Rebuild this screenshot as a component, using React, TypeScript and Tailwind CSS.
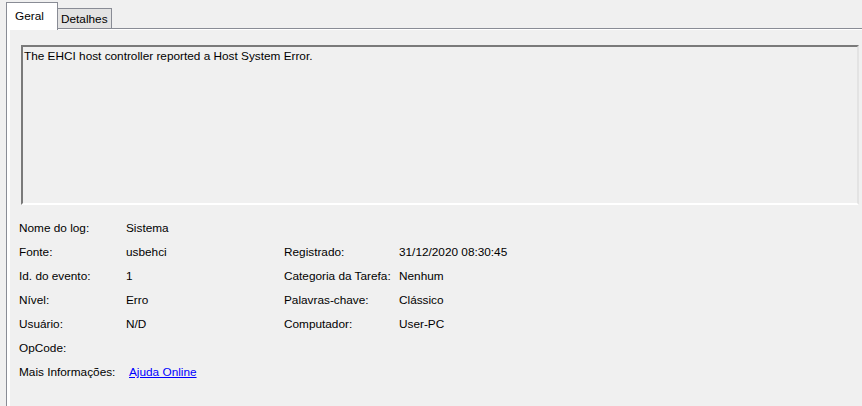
const rows: [string, React.ReactNode, string, string][] = [
  ["Nome do log:", "Sistema", "", ""],
  ["Fonte:", "usbehci", "Registrado:", "31/12/2020 08:30:45"],
  ["Id. do evento:", "1", "Categoria da Tarefa:", "Nenhum"],
  ["Nível:", "Erro", "Palavras-chave:", "Clássico"],
  ["Usuário:", "N/D", "Computador:", "User-PC"],
  ["OpCode:", "", "", ""],
  [
    "Mais Informações:",
    <a href="#" className="ml-[3px] text-[#0000ff] underline">
      Ajuda Online
    </a>,
    "",
    "",
  ],
];

export default function App() {
  return (
    <div className="w-[862px] h-[406px] overflow-hidden bg-[#f0f0f0] pt-[2px] pl-[6px] text-[11.8px] text-black [font-family:'Liberation_Sans',Arial,sans-serif]">
      <div className="flex items-end h-[26px]">
        <div className="relative z-10 -mb-[2px] h-[28px] w-[52px] border border-b-0 border-[#898c95] bg-white pl-[8px] pt-[5px] leading-[16px]">
          Geral
        </div>
        <div className="h-[20px] w-[54px] border-t border-r border-[#898c95] bg-[#e3e3e3] pl-[3px] pt-[2px] leading-[16px]">
          Detalhes
        </div>
      </div>
      <div className="h-[400px] border-t border-l border-[#898c95] bg-white pt-[1px] pl-[3px]">
        <div className="h-full bg-[#f0f0f0] pl-[11px] pt-[15px]">
          <div className="h-[160px] w-[838px] border-t-2 border-l-2 border-t-[#7a7a7a] border-l-[#7a7a7a] border-r-2 border-b-2 border-r-[#e3e3e3] border-b-[#ffffff] pl-[1px] pt-[1px] leading-[16px]">
            The EHCI host controller reported a Host System Error.
          </div>
          <div className="mt-[11px] -ml-[2px]">
            {rows.map(([l1, v1, l2, v2], i) => (
              <div
                key={i}
                className="grid h-[24px] grid-cols-[107px_158px_115px_1fr] items-center leading-[16px]"
              >
                <span>{l1}</span>
                <span>{v1}</span>
                <span>{l2}</span>
                <span>{v2}</span>
              </div>
            ))}
          </div>
        </div>
      </div>
    </div>
  );
}
